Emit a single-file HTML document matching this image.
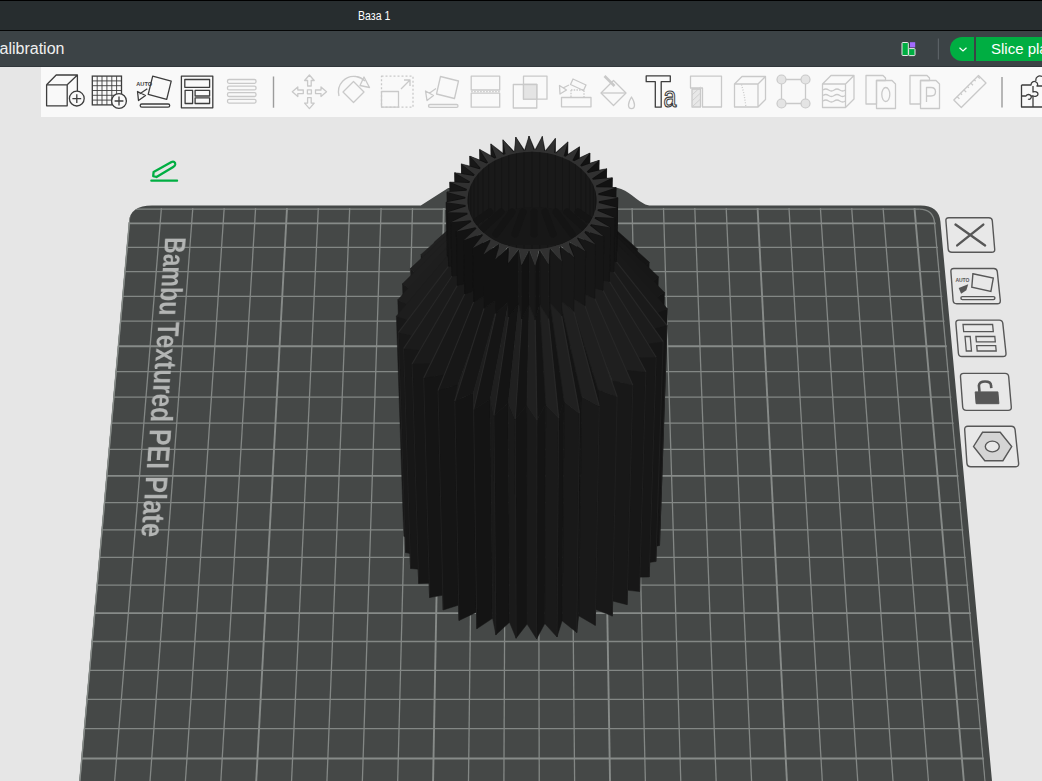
<!DOCTYPE html>
<html><head><meta charset="utf-8">
<style>
html,body{margin:0;padding:0;}
body{width:1042px;height:781px;overflow:hidden;background:#e6e6e6;position:relative;font-family:"Liberation Sans",sans-serif;}
#title{position:absolute;left:0;top:0;width:1042px;height:30px;background:#272d2f;border-top:1px solid #000;box-sizing:border-box;}
#title span{position:absolute;left:358px;top:8px;color:#fff;font-size:12px;}
#tline{position:absolute;left:0;top:30px;width:1042px;height:1px;background:#050606;}
#menu{position:absolute;left:0;top:31px;width:1042px;height:36px;background:#3c4346;border-bottom:1px solid #30363a;box-sizing:border-box;}
#menu .t{position:absolute;left:-1px;top:8px;color:#f2f2f2;font-size:15px;}
#tool{position:absolute;left:41px;top:66.7px;width:1001px;height:50px;background:#f9f9f9;}
svg{position:absolute;left:0;top:0;}
</style></head><body>
<div id="title"></div>
<div id="tline"></div>
<div id="menu"></div>
<div id="tool"></div>
<svg width="1042" height="781" viewBox="0 0 1042 781" style="top:0">
<defs><clipPath id="gc"><path d="M64.2,951.2 L128.97,221.5 Q130.4,205.5 152,205.5 L915,205.5 Q935.5,206 935.8,224 L1001.2,951.2 Z"/></clipPath></defs>
<path d="M64.2,951.2 L128.97,221.5 Q130.4,205.5 152,205.5 L420.8,205.5 L448.2,188.0 L612,187.2 C626,187.2 632,197 643.6,203.5 C646,205 648,205.5 652,205.5 L920.5,205.5 Q938.8,205.5 940.4,221.6 L1007.7,951.2 Z" fill="#454847"/>
<g clip-path="url(#gc)"><line x1="130.1" y1="208.1" x2="64.2" y2="951.2" stroke="#878b89" stroke-width="1.9"/><line x1="161.4" y1="208.1" x2="100.8" y2="951.2" stroke="#838785" stroke-width="1.3"/><line x1="192.8" y1="208.1" x2="137.3" y2="951.2" stroke="#838785" stroke-width="1.3"/><line x1="224.2" y1="208.1" x2="173.9" y2="951.2" stroke="#838785" stroke-width="1.3"/><line x1="255.6" y1="208.1" x2="210.5" y2="951.2" stroke="#838785" stroke-width="1.3"/><line x1="287.0" y1="208.1" x2="247.1" y2="951.2" stroke="#878b89" stroke-width="1.9"/><line x1="318.3" y1="208.1" x2="283.6" y2="951.2" stroke="#838785" stroke-width="1.3"/><line x1="349.7" y1="208.1" x2="320.2" y2="951.2" stroke="#838785" stroke-width="1.3"/><line x1="381.1" y1="208.1" x2="356.8" y2="951.2" stroke="#838785" stroke-width="1.3"/><line x1="412.5" y1="208.1" x2="393.3" y2="951.2" stroke="#838785" stroke-width="1.3"/><line x1="443.8" y1="208.1" x2="429.9" y2="951.2" stroke="#878b89" stroke-width="1.9"/><line x1="475.2" y1="208.1" x2="466.5" y2="951.2" stroke="#838785" stroke-width="1.3"/><line x1="506.6" y1="208.1" x2="503.1" y2="951.2" stroke="#838785" stroke-width="1.3"/><line x1="538.0" y1="208.1" x2="539.6" y2="951.2" stroke="#838785" stroke-width="1.3"/><line x1="569.3" y1="208.1" x2="576.2" y2="951.2" stroke="#838785" stroke-width="1.3"/><line x1="600.7" y1="208.1" x2="612.8" y2="951.2" stroke="#878b89" stroke-width="1.9"/><line x1="632.1" y1="208.1" x2="649.3" y2="951.2" stroke="#838785" stroke-width="1.3"/><line x1="663.5" y1="208.1" x2="685.9" y2="951.2" stroke="#838785" stroke-width="1.3"/><line x1="694.8" y1="208.1" x2="722.5" y2="951.2" stroke="#838785" stroke-width="1.3"/><line x1="726.2" y1="208.1" x2="759.1" y2="951.2" stroke="#838785" stroke-width="1.3"/><line x1="757.6" y1="208.1" x2="795.6" y2="951.2" stroke="#878b89" stroke-width="1.9"/><line x1="789.0" y1="208.1" x2="832.2" y2="951.2" stroke="#838785" stroke-width="1.3"/><line x1="820.4" y1="208.1" x2="868.8" y2="951.2" stroke="#838785" stroke-width="1.3"/><line x1="851.7" y1="208.1" x2="905.3" y2="951.2" stroke="#838785" stroke-width="1.3"/><line x1="883.1" y1="208.1" x2="941.9" y2="951.2" stroke="#838785" stroke-width="1.3"/><line x1="914.5" y1="208.1" x2="978.5" y2="951.2" stroke="#878b89" stroke-width="1.9"/><line x1="934.6" y1="223.4" x2="1000.4" y2="951.2" stroke="#838785" stroke-width="1.3"/><line x1="75.6" y1="788.6" x2="988.7" y2="788.6" stroke="#838785" stroke-width="1.3"/><line x1="78.3" y1="758.5" x2="986.0" y2="758.5" stroke="#878b89" stroke-width="1.9"/><line x1="80.9" y1="728.7" x2="983.3" y2="728.7" stroke="#838785" stroke-width="1.3"/><line x1="83.6" y1="699.3" x2="980.6" y2="699.3" stroke="#838785" stroke-width="1.3"/><line x1="86.1" y1="670.3" x2="978.0" y2="670.3" stroke="#838785" stroke-width="1.3"/><line x1="88.7" y1="641.5" x2="975.4" y2="641.5" stroke="#838785" stroke-width="1.3"/><line x1="91.2" y1="613.1" x2="972.9" y2="613.1" stroke="#878b89" stroke-width="1.9"/><line x1="93.7" y1="585.1" x2="970.3" y2="585.1" stroke="#838785" stroke-width="1.3"/><line x1="96.2" y1="557.3" x2="967.8" y2="557.3" stroke="#838785" stroke-width="1.3"/><line x1="98.6" y1="529.9" x2="965.3" y2="529.9" stroke="#838785" stroke-width="1.3"/><line x1="101.0" y1="502.7" x2="962.9" y2="502.7" stroke="#838785" stroke-width="1.3"/><line x1="103.4" y1="475.9" x2="960.4" y2="475.9" stroke="#878b89" stroke-width="1.9"/><line x1="105.7" y1="449.4" x2="958.0" y2="449.4" stroke="#838785" stroke-width="1.3"/><line x1="108.1" y1="423.2" x2="955.7" y2="423.2" stroke="#838785" stroke-width="1.3"/><line x1="110.4" y1="397.2" x2="953.3" y2="397.2" stroke="#838785" stroke-width="1.3"/><line x1="112.6" y1="371.6" x2="951.0" y2="371.6" stroke="#838785" stroke-width="1.3"/><line x1="114.9" y1="346.2" x2="948.7" y2="346.2" stroke="#878b89" stroke-width="1.9"/><line x1="117.1" y1="321.1" x2="946.4" y2="321.1" stroke="#838785" stroke-width="1.3"/><line x1="119.3" y1="296.3" x2="944.2" y2="296.3" stroke="#838785" stroke-width="1.3"/><line x1="121.5" y1="271.7" x2="942.0" y2="271.7" stroke="#838785" stroke-width="1.3"/><line x1="123.7" y1="247.4" x2="939.8" y2="247.4" stroke="#838785" stroke-width="1.3"/><line x1="125.8" y1="223.4" x2="937.6" y2="223.4" stroke="#878b89" stroke-width="1.9"/><line x1="130.1" y1="209.1" x2="919.3" y2="209.1" stroke="#838785" stroke-width="1.3"/></g>
<path d="M919.3,209.1 Q933.6,209.3 934.6,223.4" fill="none" stroke="#838785" stroke-width="1.3"/>
<line x1="129.4" y1="222" x2="64.7" y2="951.2" stroke="#858a87" stroke-width="1.4"/>
<polygon points="467.5,222.4 468.4,238.1 471.7,458.9 470.9,443.4" fill="#191919" stroke="#191919" stroke-width="0.5"/>
<polygon points="603.7,242.6 606.3,227.0 602.3,447.9 599.8,463.4" fill="#141414" stroke="#141414" stroke-width="0.5"/>
<polygon points="449.9,231.2 454.0,246.6 458.1,467.3 454.3,452.1" fill="#1a1a1a" stroke="#1a1a1a" stroke-width="0.5"/>
<polygon points="617.1,252.0 622.9,236.9 617.9,457.8 612.4,472.7" fill="#141414" stroke="#141414" stroke-width="0.5"/>
<polygon points="434.3,242.0 441.4,256.7 446.3,477.4 439.5,462.8" fill="#1a1a1a" stroke="#1a1a1a" stroke-width="0.5"/>
<polygon points="628.5,263.0 637.3,248.7 631.5,469.5 623.2,483.6" fill="#141414" stroke="#141414" stroke-width="0.5"/>
<polygon points="421.0,254.5 431.0,268.3 436.5,488.8 426.9,475.2" fill="#1a1a1a" stroke="#1a1a1a" stroke-width="0.5"/>
<polygon points="637.6,275.2 649.2,262.1 642.8,482.8 631.8,495.7" fill="#141414" stroke="#141414" stroke-width="0.5"/>
<polygon points="410.3,268.5 423.1,280.9 428.9,501.4 416.8,489.1" fill="#1a1a1a" stroke="#1a1a1a" stroke-width="0.5"/>
<polygon points="644.2,288.4 658.4,276.8 651.4,497.4 638.0,508.8" fill="#141414" stroke="#141414" stroke-width="0.5"/>
<polygon points="402.5,283.7 417.7,294.5 423.9,514.8 409.4,504.2" fill="#191919" stroke="#191919" stroke-width="0.5"/>
<polygon points="648.1,302.2 664.5,292.5 657.2,512.9 641.6,522.5" fill="#141414" stroke="#141414" stroke-width="0.5"/>
<polygon points="397.8,299.7 415.1,308.5 421.5,528.8 405.1,520.0" fill="#191919" stroke="#191919" stroke-width="0.5"/>
<polygon points="649.1,316.4 667.4,308.8 659.9,529.0 642.6,536.6" fill="#141414" stroke="#141414" stroke-width="0.5"/>
<polygon points="396.4,316.2 415.4,322.8 421.8,542.9 403.8,536.3" fill="#181818" stroke="#181818" stroke-width="0.5"/>
<polygon points="647.2,330.6 667.0,325.3 659.5,545.4 640.8,550.6" fill="#151515" stroke="#151515" stroke-width="0.5"/>
<polygon points="398.3,332.6 418.6,336.9 424.8,556.8 405.6,552.6" fill="#181818" stroke="#181818" stroke-width="0.5"/>
<polygon points="642.5,344.5 663.2,341.6 655.9,561.5 636.3,564.3" fill="#161616" stroke="#161616" stroke-width="0.5"/>
<polygon points="403.6,348.7 424.6,350.4 430.5,570.2 410.6,568.5" fill="#171717" stroke="#171717" stroke-width="0.5"/>
<polygon points="635.0,357.6 656.1,357.3 649.2,577.0 629.2,577.3" fill="#171717" stroke="#171717" stroke-width="0.5"/>
<polygon points="412.1,364.0 433.3,363.1 438.7,582.8 418.7,583.6" fill="#161616" stroke="#161616" stroke-width="0.5"/>
<polygon points="624.8,369.7 645.9,372.0 639.5,591.6 619.6,589.3" fill="#171717" stroke="#171717" stroke-width="0.5"/>
<polygon points="423.7,378.1 444.6,374.6 449.3,594.1 429.6,597.6" fill="#151515" stroke="#151515" stroke-width="0.5"/>
<polygon points="612.3,380.3 632.8,385.3 627.1,604.7 607.8,599.8" fill="#181818" stroke="#181818" stroke-width="0.5"/>
<polygon points="438.0,390.6 458.0,384.6 462.1,604.0 443.2,610.0" fill="#151515" stroke="#151515" stroke-width="0.5"/>
<polygon points="597.8,389.4 617.1,396.8 612.3,616.1 594.0,608.8" fill="#181818" stroke="#181818" stroke-width="0.5"/>
<polygon points="454.8,401.3 473.4,392.8 476.6,612.2 459.0,620.5" fill="#141414" stroke="#141414" stroke-width="0.5"/>
<polygon points="581.5,396.5 599.2,406.2 595.3,625.4 578.7,615.8" fill="#191919" stroke="#191919" stroke-width="0.5"/>
<polygon points="473.6,409.7 490.3,399.0 492.6,618.3 476.8,628.8" fill="#141414" stroke="#141414" stroke-width="0.5"/>
<polygon points="579.5,413.4 581.5,396.5 578.7,615.8 576.7,632.5" fill="#141414" stroke="#141414" stroke-width="0.5"/>
<polygon points="490.3,399.0 493.9,415.7 495.9,634.8 492.6,618.3" fill="#1a1a1a" stroke="#1a1a1a" stroke-width="0.5"/>
<polygon points="564.0,401.6 579.5,413.4 576.7,632.5 562.1,620.8" fill="#191919" stroke="#191919" stroke-width="0.5"/>
<polygon points="493.9,415.7 508.3,403.1 509.5,622.3 495.9,634.8" fill="#141414" stroke="#141414" stroke-width="0.5"/>
<polygon points="558.6,418.0 564.0,401.6 562.1,620.8 557.0,637.0" fill="#141414" stroke="#141414" stroke-width="0.5"/>
<polygon points="508.3,403.1 515.2,419.2 516.1,638.2 509.5,622.3" fill="#1a1a1a" stroke="#1a1a1a" stroke-width="0.5"/>
<polygon points="545.6,404.4 558.6,418.0 557.0,637.0 544.8,623.6" fill="#1a1a1a" stroke="#1a1a1a" stroke-width="0.5"/>
<polygon points="515.2,419.2 526.9,404.9 527.1,624.1 516.1,638.2" fill="#141414" stroke="#141414" stroke-width="0.5"/>
<polygon points="536.9,419.9 545.6,404.4 544.8,623.6 536.6,638.9" fill="#141414" stroke="#141414" stroke-width="0.5"/>
<polygon points="526.9,404.9 536.9,419.9 536.6,638.9 527.1,624.1" fill="#1a1a1a" stroke="#1a1a1a" stroke-width="0.5"/>
<line x1="398.3" y1="332.6" x2="405.6" y2="552.6" stroke="#1f1f1f" stroke-width="1.0"/>
<line x1="403.6" y1="348.7" x2="410.6" y2="568.5" stroke="#1f1f1f" stroke-width="1.0"/>
<line x1="412.1" y1="364.0" x2="418.7" y2="583.6" stroke="#1f1f1f" stroke-width="1.0"/>
<line x1="423.7" y1="378.1" x2="429.6" y2="597.6" stroke="#1f1f1f" stroke-width="1.0"/>
<line x1="438.0" y1="390.6" x2="443.2" y2="610.0" stroke="#1f1f1f" stroke-width="1.0"/>
<line x1="454.8" y1="401.3" x2="459.0" y2="620.5" stroke="#1f1f1f" stroke-width="1.0"/>
<line x1="473.6" y1="409.7" x2="476.8" y2="628.8" stroke="#1f1f1f" stroke-width="1.0"/>
<line x1="493.9" y1="415.7" x2="495.9" y2="634.8" stroke="#1f1f1f" stroke-width="1.0"/>
<line x1="515.2" y1="419.2" x2="516.1" y2="638.2" stroke="#1f1f1f" stroke-width="1.0"/>
<line x1="536.9" y1="419.9" x2="536.6" y2="638.9" stroke="#1f1f1f" stroke-width="1.0"/>
<line x1="558.6" y1="418.0" x2="557.0" y2="637.0" stroke="#1f1f1f" stroke-width="1.0"/>
<line x1="579.5" y1="413.4" x2="576.7" y2="632.5" stroke="#1f1f1f" stroke-width="1.0"/>
<line x1="599.2" y1="406.2" x2="595.3" y2="625.4" stroke="#1f1f1f" stroke-width="1.0"/>
<line x1="617.1" y1="396.8" x2="612.3" y2="616.1" stroke="#1f1f1f" stroke-width="1.0"/>
<line x1="632.8" y1="385.3" x2="627.1" y2="604.7" stroke="#1f1f1f" stroke-width="1.0"/>
<line x1="645.9" y1="372.0" x2="639.5" y2="591.6" stroke="#1f1f1f" stroke-width="1.0"/>
<line x1="656.1" y1="357.3" x2="649.2" y2="577.0" stroke="#1f1f1f" stroke-width="1.0"/>
<line x1="663.2" y1="341.6" x2="655.9" y2="561.5" stroke="#1f1f1f" stroke-width="1.0"/>
<line x1="667.0" y1="325.3" x2="659.5" y2="545.4" stroke="#1f1f1f" stroke-width="1.0"/>
<polygon points="545.0,204.8 542.1,190.3 548.1,210.5 554.8,225.3" fill="#141414" stroke="#141414" stroke-width="0.5"/>
<polygon points="516.0,191.0 514.5,205.6 501.2,226.7 506.6,211.6" fill="#1f1f1f" stroke="#1f1f1f" stroke-width="0.5"/>
<polygon points="554.8,206.9 555.0,192.2 568.5,213.7 572.2,229.1" fill="#141414" stroke="#141414" stroke-width="0.5"/>
<polygon points="503.4,193.6 504.9,208.3 484.2,231.4 486.5,215.9" fill="#1f1f1f" stroke="#1f1f1f" stroke-width="0.5"/>
<polygon points="564.2,210.2 567.3,195.7 588.1,219.2 588.6,234.9" fill="#141414" stroke="#141414" stroke-width="0.5"/>
<polygon points="491.4,197.7 495.9,212.0 468.4,238.1 467.5,222.4" fill="#202020" stroke="#202020" stroke-width="0.5"/>
<polygon points="572.7,214.6 578.8,200.6 606.3,227.0 603.7,242.6" fill="#141414" stroke="#141414" stroke-width="0.5"/>
<polygon points="480.4,203.2 487.8,216.8 454.0,246.6 449.9,231.2" fill="#202020" stroke="#202020" stroke-width="0.5"/>
<polygon points="580.3,219.9 589.2,206.8 622.9,236.9 617.1,252.0" fill="#141414" stroke="#141414" stroke-width="0.5"/>
<polygon points="470.6,209.9 480.7,222.5 441.4,256.7 434.3,242.0" fill="#202020" stroke="#202020" stroke-width="0.5"/>
<polygon points="586.7,226.0 598.2,214.1 637.3,248.7 628.5,263.0" fill="#141414" stroke="#141414" stroke-width="0.5"/>
<polygon points="462.3,217.7 474.9,229.0 431.0,268.3 421.0,254.5" fill="#202020" stroke="#202020" stroke-width="0.5"/>
<polygon points="591.8,232.9 605.6,222.5 649.2,262.1 637.6,275.2" fill="#151515" stroke="#151515" stroke-width="0.5"/>
<polygon points="455.7,226.5 470.5,236.1 423.1,280.9 410.3,268.5" fill="#1f1f1f" stroke="#1f1f1f" stroke-width="0.5"/>
<polygon points="595.4,240.3 611.3,231.6 658.4,276.8 644.2,288.4" fill="#171717" stroke="#171717" stroke-width="0.5"/>
<polygon points="450.9,235.9 467.5,243.7 417.7,294.5 402.5,283.7" fill="#1f1f1f" stroke="#1f1f1f" stroke-width="0.5"/>
<polygon points="597.5,248.0 615.0,241.4 664.5,292.5 648.1,302.2" fill="#181818" stroke="#181818" stroke-width="0.5"/>
<polygon points="448.0,245.8 466.1,251.5 415.1,308.5 397.8,299.7" fill="#1e1e1e" stroke="#1e1e1e" stroke-width="0.5"/>
<polygon points="598.0,255.9 616.7,251.4 667.4,308.8 649.1,316.4" fill="#191919" stroke="#191919" stroke-width="0.5"/>
<polygon points="447.3,256.0 466.4,259.4 415.4,322.8 396.4,316.2" fill="#1d1d1d" stroke="#1d1d1d" stroke-width="0.5"/>
<polygon points="596.8,263.8 616.3,261.6 667.0,325.3 647.2,330.6" fill="#1a1a1a" stroke="#1a1a1a" stroke-width="0.5"/>
<polygon points="448.6,266.1 468.3,267.2 418.6,336.9 398.3,332.6" fill="#1c1c1c" stroke="#1c1c1c" stroke-width="0.5"/>
<polygon points="594.1,271.4 613.8,271.6 663.2,341.6 642.5,344.5" fill="#1c1c1c" stroke="#1c1c1c" stroke-width="0.5"/>
<polygon points="452.0,276.0 471.7,274.7 424.6,350.4 403.6,348.7" fill="#1b1b1b" stroke="#1b1b1b" stroke-width="0.5"/>
<polygon points="589.8,278.7 609.3,281.3 656.1,357.3 635.0,357.6" fill="#1d1d1d" stroke="#1d1d1d" stroke-width="0.5"/>
<polygon points="457.4,285.3 476.7,281.7 433.3,363.1 412.1,364.0" fill="#1a1a1a" stroke="#1a1a1a" stroke-width="0.5"/>
<polygon points="584.0,285.3 602.9,290.2 645.9,372.0 624.8,369.7" fill="#1e1e1e" stroke="#1e1e1e" stroke-width="0.5"/>
<polygon points="464.7,294.0 483.0,288.0 444.6,374.6 423.7,378.1" fill="#181818" stroke="#181818" stroke-width="0.5"/>
<polygon points="577.0,291.2 594.7,298.3 632.8,385.3 612.3,380.3" fill="#1f1f1f" stroke="#1f1f1f" stroke-width="0.5"/>
<polygon points="473.7,301.6 490.6,293.5 458.0,384.6 438.0,390.6" fill="#171717" stroke="#171717" stroke-width="0.5"/>
<polygon points="568.8,296.2 584.8,305.4 617.1,396.8 597.8,389.4" fill="#1f1f1f" stroke="#1f1f1f" stroke-width="0.5"/>
<polygon points="490.6,293.5 484.1,308.1 454.8,401.3 458.0,384.6" fill="#1e1e1e" stroke="#1e1e1e" stroke-width="0.5"/>
<polygon points="484.1,308.1 499.3,298.0 473.4,392.8 454.8,401.3" fill="#161616" stroke="#161616" stroke-width="0.5"/>
<polygon points="573.7,311.1 568.8,296.2 597.8,389.4 599.2,406.2" fill="#141414" stroke="#141414" stroke-width="0.5"/>
<polygon points="559.7,300.1 573.7,311.1 599.2,406.2 581.5,396.5" fill="#202020" stroke="#202020" stroke-width="0.5"/>
<polygon points="499.3,298.0 495.8,313.2 473.6,409.7 473.4,392.8" fill="#1e1e1e" stroke="#1e1e1e" stroke-width="0.5"/>
<polygon points="495.8,313.2 508.7,301.4 490.3,399.0 473.6,409.7" fill="#151515" stroke="#151515" stroke-width="0.5"/>
<polygon points="561.5,315.4 559.7,300.1 581.5,396.5 579.5,413.4" fill="#141414" stroke="#141414" stroke-width="0.5"/>
<polygon points="549.9,302.8 561.5,315.4 579.5,413.4 564.0,401.6" fill="#202020" stroke="#202020" stroke-width="0.5"/>
<polygon points="508.7,301.4 508.4,316.9 493.9,415.7 490.3,399.0" fill="#1f1f1f" stroke="#1f1f1f" stroke-width="0.5"/>
<polygon points="508.4,316.9 518.8,303.7 508.3,403.1 493.9,415.7" fill="#141414" stroke="#141414" stroke-width="0.5"/>
<polygon points="548.5,318.2 549.9,302.8 564.0,401.6 558.6,418.0" fill="#141414" stroke="#141414" stroke-width="0.5"/>
<polygon points="539.6,304.4 548.5,318.2 558.6,418.0 545.6,404.4" fill="#202020" stroke="#202020" stroke-width="0.5"/>
<polygon points="518.8,303.7 521.6,319.0 515.2,419.2 508.3,403.1" fill="#202020" stroke="#202020" stroke-width="0.5"/>
<polygon points="521.6,319.0 529.2,304.7 526.9,404.9 515.2,419.2" fill="#141414" stroke="#141414" stroke-width="0.5"/>
<polygon points="535.1,319.4 539.6,304.4 545.6,404.4 536.9,419.9" fill="#141414" stroke="#141414" stroke-width="0.5"/>
<polygon points="529.2,304.7 535.1,319.4 536.9,419.9 526.9,404.9" fill="#202020" stroke="#202020" stroke-width="0.5"/>
<line x1="448.6" y1="266.1" x2="398.3" y2="332.6" stroke="#272727" stroke-width="1.2"/>
<line x1="452.0" y1="276.0" x2="403.6" y2="348.7" stroke="#272727" stroke-width="1.2"/>
<line x1="457.4" y1="285.3" x2="412.1" y2="364.0" stroke="#272727" stroke-width="1.2"/>
<line x1="464.7" y1="294.0" x2="423.7" y2="378.1" stroke="#272727" stroke-width="1.2"/>
<line x1="473.7" y1="301.6" x2="438.0" y2="390.6" stroke="#272727" stroke-width="1.2"/>
<line x1="484.1" y1="308.1" x2="454.8" y2="401.3" stroke="#272727" stroke-width="1.2"/>
<line x1="495.8" y1="313.2" x2="473.6" y2="409.7" stroke="#272727" stroke-width="1.2"/>
<line x1="508.4" y1="316.9" x2="493.9" y2="415.7" stroke="#272727" stroke-width="1.2"/>
<line x1="521.6" y1="319.0" x2="515.2" y2="419.2" stroke="#272727" stroke-width="1.2"/>
<line x1="535.1" y1="319.4" x2="536.9" y2="419.9" stroke="#272727" stroke-width="1.2"/>
<line x1="548.5" y1="318.2" x2="558.6" y2="418.0" stroke="#272727" stroke-width="1.2"/>
<line x1="561.5" y1="315.4" x2="579.5" y2="413.4" stroke="#272727" stroke-width="1.2"/>
<line x1="573.7" y1="311.1" x2="599.2" y2="406.2" stroke="#272727" stroke-width="1.2"/>
<line x1="584.8" y1="305.4" x2="617.1" y2="396.8" stroke="#272727" stroke-width="1.2"/>
<line x1="594.7" y1="298.3" x2="632.8" y2="385.3" stroke="#272727" stroke-width="1.2"/>
<line x1="602.9" y1="290.2" x2="645.9" y2="372.0" stroke="#272727" stroke-width="1.2"/>
<line x1="609.3" y1="281.3" x2="656.1" y2="357.3" stroke="#272727" stroke-width="1.2"/>
<line x1="613.8" y1="271.6" x2="663.2" y2="341.6" stroke="#272727" stroke-width="1.2"/>
<line x1="616.3" y1="261.6" x2="667.0" y2="325.3" stroke="#272727" stroke-width="1.2"/>
<polygon points="534.9,150.0 529.0,136.0 529.0,189.8 534.8,203.9" fill="#111111" stroke="#111111" stroke-width="0.5"/>
<polygon points="529.0,136.0 524.5,150.3 524.6,204.1 529.0,189.8" fill="#171717" stroke="#171717" stroke-width="0.5"/>
<polygon points="542.3,136.4 534.9,150.0 534.8,203.9 542.1,190.3" fill="#161616" stroke="#161616" stroke-width="0.5"/>
<polygon points="545.2,151.0 542.3,136.4 542.1,190.3 545.0,204.8" fill="#111111" stroke="#111111" stroke-width="0.5"/>
<polygon points="524.5,150.3 515.8,137.1 516.0,191.0 524.6,204.1" fill="#111111" stroke="#111111" stroke-width="0.5"/>
<polygon points="515.8,137.1 514.3,151.8 514.5,205.6 516.0,191.0" fill="#171717" stroke="#171717" stroke-width="0.5"/>
<polygon points="555.3,138.4 545.2,151.0 545.0,204.8 555.0,192.2" fill="#151515" stroke="#151515" stroke-width="0.5"/>
<polygon points="555.2,153.1 555.3,138.4 555.0,192.2 554.8,206.9" fill="#121212" stroke="#121212" stroke-width="0.5"/>
<polygon points="514.3,151.8 503.0,139.8 503.4,193.6 514.5,205.6" fill="#111111" stroke="#111111" stroke-width="0.5"/>
<polygon points="503.0,139.8 504.6,154.4 504.9,208.3 503.4,193.6" fill="#181818" stroke="#181818" stroke-width="0.5"/>
<polygon points="567.8,141.9 555.2,153.1 554.8,206.9 567.3,195.7" fill="#141414" stroke="#141414" stroke-width="0.5"/>
<polygon points="564.6,156.4 567.8,141.9 567.3,195.7 564.2,210.2" fill="#121212" stroke="#121212" stroke-width="0.5"/>
<polygon points="504.6,154.4 490.9,143.9 491.4,197.7 504.9,208.3" fill="#101010" stroke="#101010" stroke-width="0.5"/>
<polygon points="490.9,143.9 495.5,158.2 495.9,212.0 491.4,197.7" fill="#181818" stroke="#181818" stroke-width="0.5"/>
<polygon points="579.4,146.8 564.6,156.4 564.2,210.2 578.8,200.6" fill="#121212" stroke="#121212" stroke-width="0.5"/>
<polygon points="573.3,160.7 579.4,146.8 578.8,200.6 572.7,214.6" fill="#121212" stroke="#121212" stroke-width="0.5"/>
<polygon points="495.5,158.2 479.7,149.4 480.4,203.2 495.9,212.0" fill="#101010" stroke="#101010" stroke-width="0.5"/>
<polygon points="479.7,149.4 487.2,163.0 487.8,216.8 480.4,203.2" fill="#181818" stroke="#181818" stroke-width="0.5"/>
<polygon points="589.9,153.0 573.3,160.7 572.7,214.6 589.2,206.8" fill="#111111" stroke="#111111" stroke-width="0.5"/>
<polygon points="580.9,166.1 589.9,153.0 589.2,206.8 580.3,219.9" fill="#121212" stroke="#121212" stroke-width="0.5"/>
<polygon points="487.2,163.0 469.8,156.1 470.6,209.9 487.8,216.8" fill="#101010" stroke="#101010" stroke-width="0.5"/>
<polygon points="469.8,156.1 480.1,168.7 480.7,222.5 470.6,209.9" fill="#181818" stroke="#181818" stroke-width="0.5"/>
<polygon points="599.1,160.3 580.9,166.1 580.3,219.9 598.2,214.1" fill="#101010" stroke="#101010" stroke-width="0.5"/>
<polygon points="587.4,172.2 599.1,160.3 598.2,214.1 586.7,226.0" fill="#121212" stroke="#121212" stroke-width="0.5"/>
<polygon points="480.1,168.7 461.4,163.9 462.3,217.7 480.7,222.5" fill="#101010" stroke="#101010" stroke-width="0.5"/>
<polygon points="461.4,163.9 474.2,175.2 474.9,229.0 462.3,217.7" fill="#181818" stroke="#181818" stroke-width="0.5"/>
<polygon points="606.6,168.7 587.4,172.2 586.7,226.0 605.6,222.5" fill="#101010" stroke="#101010" stroke-width="0.5"/>
<polygon points="592.6,179.1 606.6,168.7 605.6,222.5 591.8,232.9" fill="#121212" stroke="#121212" stroke-width="0.5"/>
<polygon points="474.2,175.2 454.7,172.7 455.7,226.5 474.9,229.0" fill="#101010" stroke="#101010" stroke-width="0.5"/>
<polygon points="454.7,172.7 469.7,182.3 470.5,236.1 455.7,226.5" fill="#181818" stroke="#181818" stroke-width="0.5"/>
<polygon points="612.3,177.8 592.6,179.1 591.8,232.9 611.3,231.6" fill="#101010" stroke="#101010" stroke-width="0.5"/>
<polygon points="596.2,186.5 612.3,177.8 611.3,231.6 595.4,240.3" fill="#121212" stroke="#121212" stroke-width="0.5"/>
<polygon points="469.7,182.3 449.8,182.1 450.9,235.9 470.5,236.1" fill="#101010" stroke="#101010" stroke-width="0.5"/>
<polygon points="449.8,182.1 466.7,189.9 467.5,243.7 450.9,235.9" fill="#171717" stroke="#171717" stroke-width="0.5"/>
<polygon points="616.1,187.6 596.2,186.5 595.4,240.3 615.0,241.4" fill="#101010" stroke="#101010" stroke-width="0.5"/>
<polygon points="598.4,194.2 616.1,187.6 615.0,241.4 597.5,248.0" fill="#121212" stroke="#121212" stroke-width="0.5"/>
<polygon points="466.7,189.9 447.0,192.0 448.0,245.8 467.5,243.7" fill="#101010" stroke="#101010" stroke-width="0.5"/>
<polygon points="447.0,192.0 465.3,197.7 466.1,251.5 448.0,245.8" fill="#171717" stroke="#171717" stroke-width="0.5"/>
<polygon points="617.8,197.7 598.4,194.2 597.5,248.0 616.7,251.4" fill="#101010" stroke="#101010" stroke-width="0.5"/>
<polygon points="598.9,202.1 617.8,197.7 616.7,251.4 598.0,255.9" fill="#131313" stroke="#131313" stroke-width="0.5"/>
<polygon points="465.3,197.7 446.2,202.2 447.3,256.0 466.1,251.5" fill="#101010" stroke="#101010" stroke-width="0.5"/>
<polygon points="446.2,202.2 465.6,205.6 466.4,259.4 447.3,256.0" fill="#161616" stroke="#161616" stroke-width="0.5"/>
<polygon points="617.4,207.8 598.9,202.1 598.0,255.9 616.3,261.6" fill="#101010" stroke="#101010" stroke-width="0.5"/>
<polygon points="597.7,210.0 617.4,207.8 616.3,261.6 596.8,263.8" fill="#141414" stroke="#141414" stroke-width="0.5"/>
<polygon points="465.6,205.6 447.5,212.3 448.6,266.1 466.4,259.4" fill="#101010" stroke="#101010" stroke-width="0.5"/>
<polygon points="447.5,212.3 467.5,213.5 468.3,267.2 448.6,266.1" fill="#151515" stroke="#151515" stroke-width="0.5"/>
<polygon points="614.9,217.9 597.7,210.0 596.8,263.8 613.8,271.6" fill="#101010" stroke="#101010" stroke-width="0.5"/>
<polygon points="594.9,217.7 614.9,217.9 613.8,271.6 594.1,271.4" fill="#151515" stroke="#151515" stroke-width="0.5"/>
<polygon points="467.5,213.5 451.0,222.2 452.0,276.0 468.3,267.2" fill="#121212" stroke="#121212" stroke-width="0.5"/>
<polygon points="451.0,222.2 471.0,221.0 471.7,274.7 452.0,276.0" fill="#141414" stroke="#141414" stroke-width="0.5"/>
<polygon points="610.4,227.5 594.9,217.7 594.1,271.4 609.3,281.3" fill="#101010" stroke="#101010" stroke-width="0.5"/>
<polygon points="590.6,224.9 610.4,227.5 609.3,281.3 589.8,278.7" fill="#161616" stroke="#161616" stroke-width="0.5"/>
<polygon points="471.0,221.0 456.4,231.6 457.4,285.3 471.7,274.7" fill="#131313" stroke="#131313" stroke-width="0.5"/>
<polygon points="456.4,231.6 476.0,228.0 476.7,281.7 457.4,285.3" fill="#131313" stroke="#131313" stroke-width="0.5"/>
<polygon points="603.8,236.5 590.6,224.9 589.8,278.7 602.9,290.2" fill="#101010" stroke="#101010" stroke-width="0.5"/>
<polygon points="584.8,231.6 603.8,236.5 602.9,290.2 584.0,285.3" fill="#161616" stroke="#161616" stroke-width="0.5"/>
<polygon points="476.0,228.0 463.8,240.2 464.7,294.0 476.7,281.7" fill="#141414" stroke="#141414" stroke-width="0.5"/>
<polygon points="463.8,240.2 482.4,234.3 483.0,288.0 464.7,294.0" fill="#121212" stroke="#121212" stroke-width="0.5"/>
<polygon points="595.5,244.6 584.8,231.6 584.0,285.3 594.7,298.3" fill="#111111" stroke="#111111" stroke-width="0.5"/>
<polygon points="577.6,237.5 595.5,244.6 594.7,298.3 577.0,291.2" fill="#171717" stroke="#171717" stroke-width="0.5"/>
<polygon points="482.4,234.3 472.9,247.9 473.7,301.6 483.0,288.0" fill="#151515" stroke="#151515" stroke-width="0.5"/>
<polygon points="472.9,247.9 490.1,239.8 490.6,293.5 473.7,301.6" fill="#121212" stroke="#121212" stroke-width="0.5"/>
<polygon points="585.6,251.6 577.6,237.5 577.0,291.2 584.8,305.4" fill="#111111" stroke="#111111" stroke-width="0.5"/>
<polygon points="569.3,242.4 585.6,251.6 584.8,305.4 568.8,296.2" fill="#171717" stroke="#171717" stroke-width="0.5"/>
<polygon points="490.1,239.8 483.5,254.4 484.1,308.1 490.6,293.5" fill="#161616" stroke="#161616" stroke-width="0.5"/>
<polygon points="483.5,254.4 498.8,244.3 499.3,298.0 484.1,308.1" fill="#121212" stroke="#121212" stroke-width="0.5"/>
<polygon points="574.3,257.4 569.3,242.4 568.8,296.2 573.7,311.1" fill="#111111" stroke="#111111" stroke-width="0.5"/>
<polygon points="560.1,246.4 574.3,257.4 573.7,311.1 559.7,300.1" fill="#181818" stroke="#181818" stroke-width="0.5"/>
<polygon points="498.8,244.3 495.3,259.5 495.8,313.2 499.3,298.0" fill="#171717" stroke="#171717" stroke-width="0.5"/>
<polygon points="495.3,259.5 508.4,247.7 508.7,301.4 495.8,313.2" fill="#121212" stroke="#121212" stroke-width="0.5"/>
<polygon points="561.9,261.7 560.1,246.4 559.7,300.1 561.5,315.4" fill="#121212" stroke="#121212" stroke-width="0.5"/>
<polygon points="550.1,249.1 561.9,261.7 561.5,315.4 549.9,302.8" fill="#181818" stroke="#181818" stroke-width="0.5"/>
<polygon points="508.4,247.7 508.1,263.2 508.4,316.9 508.7,301.4" fill="#181818" stroke="#181818" stroke-width="0.5"/>
<polygon points="508.1,263.2 518.6,250.0 518.8,303.7 508.4,316.9" fill="#121212" stroke="#121212" stroke-width="0.5"/>
<polygon points="548.7,264.5 550.1,249.1 549.9,302.8 548.5,318.2" fill="#121212" stroke="#121212" stroke-width="0.5"/>
<polygon points="539.7,250.7 548.7,264.5 548.5,318.2 539.6,304.4" fill="#181818" stroke="#181818" stroke-width="0.5"/>
<polygon points="518.6,250.0 521.5,265.3 521.6,319.0 518.8,303.7" fill="#181818" stroke="#181818" stroke-width="0.5"/>
<polygon points="521.5,265.3 529.1,251.0 529.2,304.7 521.6,319.0" fill="#121212" stroke="#121212" stroke-width="0.5"/>
<polygon points="535.1,265.7 539.7,250.7 539.6,304.4 535.1,319.4" fill="#121212" stroke="#121212" stroke-width="0.5"/>
<polygon points="529.1,251.0 535.1,265.7 535.1,319.4 529.2,304.7" fill="#181818" stroke="#181818" stroke-width="0.5"/>
<path d="M617.8,197.7 L598.5,195.0 L598.2,193.4 L616.1,187.6 L596.5,187.2 L595.9,185.7 L612.3,177.8 L593.0,179.8 L592.1,178.4 L606.6,168.7 L588.0,172.9 L586.8,171.6 L599.1,160.3 L581.6,166.6 L580.2,165.5 L589.9,153.0 L574.1,161.2 L572.4,160.3 L579.4,146.8 L565.5,156.8 L563.7,156.0 L567.8,141.9 L556.1,153.4 L554.2,152.8 L555.3,138.4 L546.2,151.1 L544.2,150.8 L542.3,136.4 L535.9,150.1 L533.8,150.0 L529.0,136.0 L525.5,150.2 L523.5,150.4 L515.8,137.1 L515.3,151.6 L513.3,152.0 L503.0,139.8 L505.5,154.1 L503.6,154.8 L490.9,143.9 L496.3,157.8 L494.6,158.6 L479.7,149.4 L488.0,162.5 L486.5,163.5 L469.8,156.1 L480.7,168.1 L479.4,169.3 L461.4,163.9 L474.7,174.5 L473.7,175.9 L454.7,172.7 L470.0,181.6 L469.3,183.0 L449.8,182.1 L466.9,189.1 L466.5,190.7 L447.0,192.0 L465.4,196.9 L465.2,198.5 L446.2,202.2 L465.5,204.9 L465.7,206.4 L447.5,212.3 L467.2,212.7 L467.7,214.2 L451.0,222.2 L470.5,220.2 L471.4,221.7 L456.4,231.6 L475.4,227.3 L476.6,228.6 L463.8,240.2 L481.7,233.7 L483.1,234.9 L472.9,247.9 L489.3,239.3 L490.9,240.3 L483.5,254.4 L497.9,243.9 L499.8,244.7 L495.3,259.5 L507.4,247.4 L509.4,248.0 L508.1,263.2 L517.6,249.8 L519.7,250.1 L521.5,265.3 L528.1,250.9 L530.2,251.0 L535.1,265.7 L538.7,250.8 L540.8,250.6 L548.7,264.5 L549.1,249.3 L551.2,248.9 L561.9,261.7 L559.1,246.7 L561.1,246.0 L574.3,257.4 L568.4,242.9 L570.2,242.0 L585.6,251.6 L576.8,238.0 L578.4,236.9 L595.5,244.6 L584.1,232.2 L585.4,231.0 L603.8,236.5 L590.0,225.6 L591.1,224.2 L610.4,227.5 L594.5,218.4 L595.3,216.9 L614.9,217.9 L597.5,210.8 L597.9,209.2 L617.4,207.8 L598.8,202.9 L598.9,201.3Z" fill="#313131"/>
<defs><clipPath id="hole"><path d="M596.5,199.9 L596.3,196.7 L595.8,193.6 L595.1,190.4 L594.1,187.4 L592.8,184.3 L591.3,181.4 L589.5,178.5 L587.5,175.7 L585.2,173.0 L582.8,170.5 L580.1,168.1 L577.2,165.8 L574.1,163.6 L570.9,161.6 L567.5,159.8 L563.9,158.2 L560.2,156.7 L556.4,155.4 L552.5,154.3 L548.5,153.4 L544.4,152.7 L540.3,152.2 L536.2,151.9 L532.0,151.8 L527.8,151.9 L523.7,152.2 L519.6,152.7 L515.5,153.4 L511.5,154.3 L507.6,155.4 L503.8,156.7 L500.1,158.2 L496.5,159.8 L493.1,161.6 L489.9,163.6 L486.8,165.8 L483.9,168.1 L481.3,170.5 L478.8,173.0 L476.5,175.7 L474.5,178.5 L472.8,181.4 L471.3,184.3 L470.0,187.4 L469.0,190.4 L468.3,193.6 L467.8,196.7 L467.6,199.9 L467.7,203.1 L468.1,206.3 L468.7,209.4 L469.7,212.6 L470.9,215.6 L472.3,218.6 L474.0,221.6 L476.0,224.4 L478.2,227.1 L480.6,229.7 L483.3,232.2 L486.2,234.6 L489.3,236.8 L492.5,238.9 L496.0,240.8 L499.6,242.5 L503.3,244.0 L507.2,245.3 L511.2,246.5 L515.2,247.4 L519.4,248.2 L523.6,248.7 L527.8,249.0 L532.1,249.1 L536.3,249.0 L540.6,248.7 L544.8,248.2 L548.9,247.4 L553.0,246.5 L557.0,245.3 L560.9,244.0 L564.6,242.5 L568.2,240.8 L571.6,238.9 L574.9,236.8 L578.0,234.6 L580.8,232.2 L583.5,229.7 L585.9,227.1 L588.1,224.4 L590.1,221.6 L591.8,218.6 L593.3,215.6 L594.4,212.6 L595.4,209.4 L596.0,206.3 L596.4,203.1Z"/></clipPath></defs>
<path d="M596.5,199.9 L596.3,196.7 L595.8,193.6 L595.1,190.4 L594.1,187.4 L592.8,184.3 L591.3,181.4 L589.5,178.5 L587.5,175.7 L585.2,173.0 L582.8,170.5 L580.1,168.1 L577.2,165.8 L574.1,163.6 L570.9,161.6 L567.5,159.8 L563.9,158.2 L560.2,156.7 L556.4,155.4 L552.5,154.3 L548.5,153.4 L544.4,152.7 L540.3,152.2 L536.2,151.9 L532.0,151.8 L527.8,151.9 L523.7,152.2 L519.6,152.7 L515.5,153.4 L511.5,154.3 L507.6,155.4 L503.8,156.7 L500.1,158.2 L496.5,159.8 L493.1,161.6 L489.9,163.6 L486.8,165.8 L483.9,168.1 L481.3,170.5 L478.8,173.0 L476.5,175.7 L474.5,178.5 L472.8,181.4 L471.3,184.3 L470.0,187.4 L469.0,190.4 L468.3,193.6 L467.8,196.7 L467.6,199.9 L467.7,203.1 L468.1,206.3 L468.7,209.4 L469.7,212.6 L470.9,215.6 L472.3,218.6 L474.0,221.6 L476.0,224.4 L478.2,227.1 L480.6,229.7 L483.3,232.2 L486.2,234.6 L489.3,236.8 L492.5,238.9 L496.0,240.8 L499.6,242.5 L503.3,244.0 L507.2,245.3 L511.2,246.5 L515.2,247.4 L519.4,248.2 L523.6,248.7 L527.8,249.0 L532.1,249.1 L536.3,249.0 L540.6,248.7 L544.8,248.2 L548.9,247.4 L553.0,246.5 L557.0,245.3 L560.9,244.0 L564.6,242.5 L568.2,240.8 L571.6,238.9 L574.9,236.8 L578.0,234.6 L580.8,232.2 L583.5,229.7 L585.9,227.1 L588.1,224.4 L590.1,221.6 L591.8,218.6 L593.3,215.6 L594.4,212.6 L595.4,209.4 L596.0,206.3 L596.4,203.1Z" fill="#191919"/>
<g clip-path="url(#hole)"><line x1="467.0" y1="150" x2="467.0" y2="250" stroke="#151515" stroke-width="1"/><line x1="468.4" y1="150" x2="468.4" y2="250" stroke="#151515" stroke-width="1"/><line x1="470.8" y1="150" x2="470.8" y2="250" stroke="#151515" stroke-width="1"/><line x1="474.0" y1="150" x2="474.0" y2="250" stroke="#151515" stroke-width="1"/><line x1="478.1" y1="150" x2="478.1" y2="250" stroke="#151515" stroke-width="1"/><line x1="483.0" y1="150" x2="483.0" y2="250" stroke="#151515" stroke-width="1"/><line x1="488.6" y1="150" x2="488.6" y2="250" stroke="#151515" stroke-width="1"/><line x1="494.8" y1="150" x2="494.8" y2="250" stroke="#151515" stroke-width="1"/><line x1="501.6" y1="150" x2="501.6" y2="250" stroke="#151515" stroke-width="1"/><line x1="508.8" y1="150" x2="508.8" y2="250" stroke="#151515" stroke-width="1"/><line x1="516.4" y1="150" x2="516.4" y2="250" stroke="#151515" stroke-width="1"/><line x1="524.1" y1="150" x2="524.1" y2="250" stroke="#151515" stroke-width="1"/><line x1="532.0" y1="150" x2="532.0" y2="250" stroke="#151515" stroke-width="1"/><line x1="539.9" y1="150" x2="539.9" y2="250" stroke="#151515" stroke-width="1"/><line x1="547.7" y1="150" x2="547.7" y2="250" stroke="#151515" stroke-width="1"/><line x1="555.3" y1="150" x2="555.3" y2="250" stroke="#151515" stroke-width="1"/><line x1="562.5" y1="150" x2="562.5" y2="250" stroke="#151515" stroke-width="1"/><line x1="569.3" y1="150" x2="569.3" y2="250" stroke="#151515" stroke-width="1"/><line x1="575.5" y1="150" x2="575.5" y2="250" stroke="#151515" stroke-width="1"/><line x1="581.1" y1="150" x2="581.1" y2="250" stroke="#151515" stroke-width="1"/><line x1="585.9" y1="150" x2="585.9" y2="250" stroke="#151515" stroke-width="1"/><line x1="590.0" y1="150" x2="590.0" y2="250" stroke="#151515" stroke-width="1"/><line x1="593.3" y1="150" x2="593.3" y2="250" stroke="#151515" stroke-width="1"/><line x1="595.6" y1="150" x2="595.6" y2="250" stroke="#151515" stroke-width="1"/><line x1="597.1" y1="150" x2="597.1" y2="250" stroke="#151515" stroke-width="1"/><path d="M466,245 C476,218 508,207 534,207 C562,207 592,218 602,245 Z" fill="#171717"/><path d="M490.0,212 L458.0,234" stroke="#141414" stroke-width="7" stroke-linecap="round"/><path d="M501.0,212 L477.0,234" stroke="#141414" stroke-width="7" stroke-linecap="round"/><path d="M512.0,212 L496.0,234" stroke="#141414" stroke-width="7" stroke-linecap="round"/><path d="M523.0,212 L515.0,234" stroke="#141414" stroke-width="7" stroke-linecap="round"/><path d="M534.0,212 L534.0,234" stroke="#141414" stroke-width="7" stroke-linecap="round"/><path d="M545.0,212 L553.0,234" stroke="#141414" stroke-width="7" stroke-linecap="round"/><path d="M556.0,212 L572.0,234" stroke="#141414" stroke-width="7" stroke-linecap="round"/><path d="M567.0,212 L591.0,234" stroke="#141414" stroke-width="7" stroke-linecap="round"/><path d="M578.0,212 L610.0,234" stroke="#141414" stroke-width="7" stroke-linecap="round"/></g>
<g stroke="#3d3d3d" stroke-width="1.3" fill="none" stroke-linejoin="round"><rect x="46.6" y="84.8" width="20.6" height="21"/><path d="M46.6,84.8 L56.2,75 L77.4,75 L67.2,84.8 M77.4,75 L77.4,91"/></g>
<circle cx="76.8" cy="98.6" r="7.4" fill="#f9f9f9" stroke="#3d3d3d" stroke-width="1.3"/><path d="M72.4,98.6 H81.2 M76.8,94.2 V103" stroke="#3d3d3d" stroke-width="1.3"/>
<rect x="92.3" y="76.1" width="29.2" height="28.8" stroke="#3d3d3d" stroke-width="1.3" fill="none"/><path d="M97.2,76.1 V104.9 M92.3,80.9 H121.5" stroke="#3d3d3d" stroke-width="0.9"/><path d="M102.0,76.1 V104.9 M92.3,85.7 H121.5" stroke="#3d3d3d" stroke-width="0.9"/><path d="M106.9,76.1 V104.9 M92.3,90.5 H121.5" stroke="#3d3d3d" stroke-width="0.9"/><path d="M111.8,76.1 V104.9 M92.3,95.3 H121.5" stroke="#3d3d3d" stroke-width="0.9"/><path d="M116.6,76.1 V104.9 M92.3,100.1 H121.5" stroke="#3d3d3d" stroke-width="0.9"/>
<circle cx="119" cy="101" r="7.4" fill="#f9f9f9" stroke="#3d3d3d" stroke-width="1.3"/><path d="M114.6,101 H123.4 M119,96.6 V105.4" stroke="#3d3d3d" stroke-width="1.3"/>
<text x="136.3" y="86.3" font-size="5.6" font-weight="bold" fill="#3d3d3d" font-family="Liberation Sans">AUTO</text>
<path d="M152.7,76.1 L171.2,81.1 L166.7,99.3 L148.2,94.3 Z" stroke-width="1.3" fill="none" stroke-linejoin="round" stroke="#3d3d3d"/>
<path d="M147.3,88.8 L139.5,94 M137.5,91.5 L138.5,100.5 L145.5,95.5 Z" stroke-width="1.3" fill="none" stroke-linejoin="round" stroke="#3d3d3d"/>
<rect x="140.2" y="104" width="29.5" height="3.2" rx="1.6" stroke-width="1.3" fill="none" stroke-linejoin="round" stroke="#3d3d3d"/>
<g stroke="#3d3d3d" stroke-width="1.3" fill="none" stroke-linejoin="round"><rect x="181.4" y="76.1" width="31.4" height="31.7"/><rect x="184.8" y="79.5" width="24.8" height="7.8"/><rect x="185.1" y="90.3" width="7.5" height="13.2"/><rect x="195.1" y="90.3" width="14.5" height="5.7"/><rect x="195.1" y="97.8" width="14.5" height="5.7"/></g>
<g stroke="#c9c9c9" stroke-width="1.3" fill="none" stroke-linejoin="round"><rect x="227.5" y="79.5" width="28.5" height="3.8" rx="1.5"/><rect x="227.5" y="86.1" width="28.5" height="3.8" rx="1.5"/><rect x="227.5" y="92.7" width="28.5" height="3.8" rx="1.5"/><rect x="227.5" y="99.3" width="28.5" height="3.8" rx="1.5"/></g>
<rect x="272.8" y="76.5" width="1.4" height="31.2" fill="#9c9c9c"/>
<g stroke="#c9c9c9" stroke-width="1.3" fill="none" stroke-linejoin="round"><path d="M309.4,75 L304.6,80.5 H307.6 V86 H311.2 V80.5 H314.2 Z"/><path d="M309.4,108.6 L304.6,103.1 H307.6 V97.6 H311.2 V103.1 H314.2 Z"/><path d="M292.3,91.8 L297.8,87 V90 H303.3 V93.6 H297.8 V96.6 Z"/><path d="M326.5,91.8 L321,87 V90 H315.5 V93.6 H321 V96.6 Z"/><rect x="307.4" y="89.8" width="4" height="4"/></g>
<g stroke="#c9c9c9" stroke-width="1.3" fill="none" stroke-linejoin="round"><path d="M353.5,81.5 L364,92 L353.5,102.5 L343,92 Z"/><path d="M339,96 C336,84 346,75 356,76.5 C360,77 363,79 365,81"/><path d="M364,77 L369.5,87.5 L360,85.5 Z"/></g>
<g stroke="#c9c9c9" stroke-width="1.3" fill="none" stroke-linejoin="round"><rect x="381.5" y="76.2" width="31.5" height="31" stroke-dasharray="2,2"/><rect x="381.5" y="91.5" width="17" height="15.7"/><path d="M401,89 L409.5,80.5 M404,80 H410 V86"/></g>
<g stroke="#c9c9c9" stroke-width="1.3" fill="none" stroke-linejoin="round"><path d="M440.5,76.5 L458.5,81 L454.5,98.5 L436.5,94 Z"/><path d="M436,88.5 L429,93.5 M425.5,91 L427,100.5 L433.5,95.5 Z"/><rect x="428.5" y="104.5" width="29.5" height="2.8" rx="1.4"/></g>
<g stroke="#c9c9c9" stroke-width="1.3" fill="none" stroke-linejoin="round"><rect x="471.2" y="76.2" width="28.5" height="13.8"/><rect x="471.2" y="93.2" width="28.5" height="14"/><path d="M471.2,91.6 H499.7" stroke-dasharray="1.5,1.5"/></g>
<g stroke="#c9c9c9" stroke-width="1.3" fill="none" stroke-linejoin="round"><rect x="513.3" y="84.5" width="23.5" height="23.5"/><rect x="523.5" y="76.2" width="23.5" height="23"/><rect x="523.5" y="84.5" width="13.3" height="14.7" fill="#e4e4e4"/></g>
<g stroke="#c9c9c9" stroke-width="1.3" fill="none" stroke-linejoin="round"><rect x="561.5" y="97.5" width="29.5" height="9.3"/><path d="M571,90 V97.5 M571,90 H584 V97.5" stroke-dasharray="1.5,1.2"/><path d="M573,79 L586,85 L583.5,90.5 L570.5,84.5 Z"/><path d="M569,85 L563,88 M559.5,85.5 L560,94 L566.5,90 Z"/></g>
<g stroke="#c9c9c9" stroke-width="1.3" fill="none" stroke-linejoin="round"><path d="M601,93 L613.5,80.5 L626,93 L613.5,105.5 Z"/><path d="M601,93 H626"/><path d="M604.5,76 L614.5,86" stroke-width="2.6"/><path d="M631.5,97 C629,101 628.5,103 628.5,105 C628.5,107.2 630,108.6 631.5,108.6 C633,108.6 634.5,107.2 634.5,105 C634.5,103 634,101 631.5,97 Z"/></g>
<path d="M646.2,75.9 H670.3 V81.7 H661.2 V107.2 H655.3 V81.7 H646.2 Z" fill="none" stroke="#3d3d3d" stroke-width="1.3" stroke-linejoin="round"/>
<text transform="translate(663.6,107.4) scale(0.8,1)" font-size="29" fill="#f9f9f9" stroke="#3d3d3d" stroke-width="1.2" font-family="Liberation Sans">a</text>
<g stroke="#c9c9c9" stroke-width="1.3" fill="none" stroke-linejoin="round"><path d="M690.5,76.2 H721.5 V107 H702.5 V88 H690.5 Z"/><rect x="692" y="89" width="8.5" height="18" fill="#e8e8e8"/></g>
<path d="M692,95 L700.5,87 M692,101 L700.5,93 M692,107 L700.5,99" stroke="#cdcdcd" stroke-width="0.9"/>
<g stroke="#c9c9c9" stroke-width="1.3" fill="none" stroke-linejoin="round"><path d="M734.5,84 L742,76.5 H765.5 V99.5 L758,107 H734.5 Z M734.5,84 H758 L765.5,76.5 M758,84 V107"/><path d="M741.5,84.5 L744,94 L746,107" stroke-dasharray="1,1.6"/></g>
<g stroke="#c9c9c9" stroke-width="1.3" fill="none" stroke-linejoin="round"><rect x="781.5" y="79.5" width="24" height="24"/></g><circle cx="781.5" cy="79.5" r="4.5" fill="#e4e4e4" stroke="#c9c9c9" stroke-width="1.2"/><circle cx="805.5" cy="79.5" r="4.5" fill="#e4e4e4" stroke="#c9c9c9" stroke-width="1.2"/><circle cx="781.5" cy="103.5" r="4.5" fill="#e4e4e4" stroke="#c9c9c9" stroke-width="1.2"/><circle cx="805.5" cy="103.5" r="4.5" fill="#e4e4e4" stroke="#c9c9c9" stroke-width="1.2"/>
<g stroke="#c9c9c9" stroke-width="1.3" fill="none" stroke-linejoin="round"><path d="M822.5,84 L831,75.5 H854 V99 L845.5,107.5 H822.5 Z M822.5,84 H845.5 L854,75.5 M845.5,84 V107.5"/><path d="M823,90 q2.8,-2 5.6,0 t5.6,0 t5.6,0 t5.6,0"/><path d="M823,95.5 q2.8,-2 5.6,0 t5.6,0 t5.6,0 t5.6,0"/><path d="M823,101 q2.8,-2 5.6,0 t5.6,0 t5.6,0 t5.6,0"/></g>
<g stroke="#c9c9c9" stroke-width="1.3" fill="none" stroke-linejoin="round"><path d="M866,75.5 H883 L885.5,78 V80.5 H876.5 V104 H866 Z"/><path d="M876.5,80.5 H892 L895.5,84 V108.5 H876.5 Z"/><ellipse cx="885.8" cy="94.5" rx="4" ry="7"/></g>
<g stroke="#c9c9c9" stroke-width="1.3" fill="none" stroke-linejoin="round"><path d="M910,75.5 H927 L929.5,78 V80.5 H920.5 V104 H910 Z"/><path d="M920.5,80.5 H936 L939.5,84 V108.5 H920.5 Z"/><path d="M926.5,102 V87.5 H931 C934,87.5 935.5,89.5 935.5,91.8 C935.5,94 934,96 931,96 H926.5"/></g>
<g stroke="#c9c9c9" stroke-width="1.3" fill="none" stroke-linejoin="round"><path d="M953.8,100 L978.5,75.5 L986,83 L961.3,107.5 Z"/><path d="M957.0,96.5 l2.4,2.4"/><path d="M960.4,93.1 l1.6,1.6"/><path d="M963.8,89.7 l2.4,2.4"/><path d="M967.2,86.3 l1.6,1.6"/><path d="M970.6,82.9 l2.4,2.4"/><path d="M974.0,79.5 l1.6,1.6"/><path d="M977.4,76.1 l2.4,2.4"/></g>
<rect x="1001.3" y="77" width="1.4" height="30.5" fill="#9c9c9c"/>
<g stroke="#3d3d3d" stroke-width="1.3" fill="none" stroke-linejoin="round"><path d="M1021.5,85 H1031 C1031,82 1034,80.5 1036,82 C1038,83 1038,85 1037,86 H1042"/><path d="M1021.5,85 V107 H1042"/><path d="M1021.5,96 H1026 C1027,94 1030,94 1031,96 C1032,98 1030,100 1028,99 M1031,96 H1033 V107"/><path d="M1033,86 V92 C1035,91 1038,92 1038,94 C1038,96 1035,97 1033,96"/><path d="M1036,81 C1035,77 1039,75 1042,76.5"/></g>
<text x="358" y="20" font-size="12" fill="#ffffff" font-family="Liberation Sans" textLength="32.3" lengthAdjust="spacingAndGlyphs">Ваза 1</text>
<text x="-0.5" y="53.8" font-size="16" fill="#f0f0f0" font-family="Liberation Sans" textLength="65" lengthAdjust="spacingAndGlyphs">alibration</text>
<rect x="902" y="42.5" width="6.3" height="13" rx="0.8" fill="#00ae42" stroke="#e8e8e8" stroke-width="1"/><rect x="908.6" y="48.6" width="6.4" height="7" rx="0.8" fill="#00ae42" stroke="#e8e8e8" stroke-width="1"/><rect x="910" y="42.2" width="5.2" height="5.2" fill="#a26bff"/>
<rect x="937.8" y="38.5" width="1.2" height="21" fill="#5a6165"/>
<path d="M962,37 H974 V61 H962 A12,12 0 0 1 962,37 Z" fill="#00ae42"/><rect x="976" y="37" width="70" height="24" fill="#00ae42"/><path d="M959.5,47.8 L963,51 L966.5,47.8" fill="none" stroke="#fff" stroke-width="1.2"/>
<text x="991" y="54" font-size="15" fill="#ffffff" font-family="Liberation Sans">Slice plate</text>
<path d="M153.2,176.2 L153.6,172 L171.5,162 C173.5,161 175.5,162 175.2,164.5 C175,165.5 174,166.5 173.2,167 L156.5,177 Z" fill="none" stroke="#00ae42" stroke-width="2.3" stroke-linejoin="round"/><rect x="150.2" y="179.6" width="28" height="2.2" rx="1.1" fill="#00ae42"/>
<path d="M948.8,217.7 L988.8,217.7 Q992.0,217.7 992.3,220.8 L994.7,249.2 Q995.0,252.3 991.7,252.3 L951.8,252.3 Q948.5,252.3 948.2,249.2 L945.9,220.8 Q945.6,217.7 948.8,217.7 Z" fill="#e8e8e8" stroke="#575757" stroke-width="1.4"/>
<path d="M953.8,268.5 L993.8,268.5 Q997.0,268.5 997.3,271.7 L1000.3,300.5 Q1000.6,303.7 997.3,303.7 L956.7,303.7 Q953.4,303.7 953.1,300.5 L950.9,271.7 Q950.6,268.5 953.8,268.5 Z" fill="#e8e8e8" stroke="#575757" stroke-width="1.4"/>
<path d="M958.9,320.1 L999.2,320.1 Q1002.5,320.1 1002.8,323.4 L1006.0,353.2 Q1006.3,356.5 1003.0,356.5 L962.0,356.5 Q958.7,356.5 958.4,353.2 L955.9,323.4 Q955.6,320.1 958.9,320.1 Z" fill="#e8e8e8" stroke="#575757" stroke-width="1.4"/>
<path d="M963.6,373.4 L1005.0,373.4 Q1008.4,373.4 1008.7,376.8 L1011.3,407.0 Q1011.6,410.4 1008.2,410.4 L966.4,410.4 Q963.0,410.4 962.7,407.0 L960.5,376.8 Q960.2,373.4 963.6,373.4 Z" fill="#e8e8e8" stroke="#575757" stroke-width="1.4"/>
<path d="M967.9,426.2 L1011.2,426.2 Q1014.7,426.2 1015.1,429.9 L1018.6,463.1 Q1019.0,466.8 1015.4,466.8 L970.8,466.8 Q967.2,466.8 966.9,463.1 L964.7,429.9 Q964.4,426.2 967.9,426.2 Z" fill="#e8e8e8" stroke="#575757" stroke-width="1.4"/>
<path d="M955.5,224.6 L985.1,245.4 M983.3,224.6 L957.2,245.4" stroke="#575757" stroke-width="2.4" stroke-linecap="round"/>
<polygon points="972.9,273.8 993.3,278.0 990.9,291.4 971.8,287.2" fill="none" stroke="#575757" stroke-width="1.4"/>
<path d="M962.4,298.1 L993.4,298.1" stroke="#575757" stroke-width="4.4" stroke-linecap="round"/><path d="M962.4,298.1 L993.4,298.1" stroke="#e8e8e8" stroke-width="1.6" stroke-linecap="round"/>
<text x="955.4" y="281.9" font-size="5" font-weight="bold" fill="#575757" font-family="Liberation Sans">AUTO</text>
<polygon points="958.7,287.9 968.2,284.3 966.4,290.3 961.1,293.8" fill="#575757"/>
<polygon points="963.0,324.5 992.6,324.5 993.3,331.7 963.7,331.7" fill="none" stroke="#575757" stroke-width="1.3"/>
<polygon points="965.0,336.5 970.2,336.5 971.5,351.0 966.3,351.0" fill="none" stroke="#575757" stroke-width="1.3"/>
<polygon points="975.9,336.5 994.8,336.5 995.3,341.9 976.4,341.9" fill="none" stroke="#575757" stroke-width="1.3"/>
<polygon points="976.7,345.6 995.7,345.6 996.2,351.0 977.2,351.0" fill="none" stroke="#575757" stroke-width="1.3"/>
<polygon points="975.2,391.9 997.9,391.9 998.9,403.7 976.1,403.7" fill="#575757" stroke="#575757" stroke-width="1"/>
<path d="M979.5,391.9 L978.9,385.5 Q979.4,381.5 985.0,381.5 Q991.0,381.5 991.0,385.5 L991.3,388.2" fill="none" stroke="#575757" stroke-width="2.6"/>
<polygon points="973.5,446.5 982.5,432.3 1000.2,432.3 1011.7,446.5 1002.9,460.7 984.8,460.7" fill="#d4d4d4" stroke="#575757" stroke-width="1.4"/>
<ellipse cx="992.3" cy="446.5" rx="7" ry="5.4" fill="#e8e8e8" stroke="#575757" stroke-width="1.4"/>
</svg>
<div id="ptxt" style="position:absolute;left:0;top:0;width:1024px;height:1024px;transform-origin:0 0;transform:matrix3d(0.90756935,-3.039841e-14,0,-2.0268474e-17,-0.080944297,0.65513305,0,-0.00015332715,0,0,1,0,150.4912,241.93009,0,1.157007);">
<span style="position:absolute;left:0;top:0;transform-origin:0 0;transform:translate(41px,47px) rotate(90deg) translate(0,-100%);white-space:nowrap;font-family:'Liberation Sans',sans-serif;font-weight:bold;font-size:37.8px;line-height:1;color:#b3b5b4;" id="ptspan">Bambu Textured PEI Plate</span>
</div>
</body></html>
